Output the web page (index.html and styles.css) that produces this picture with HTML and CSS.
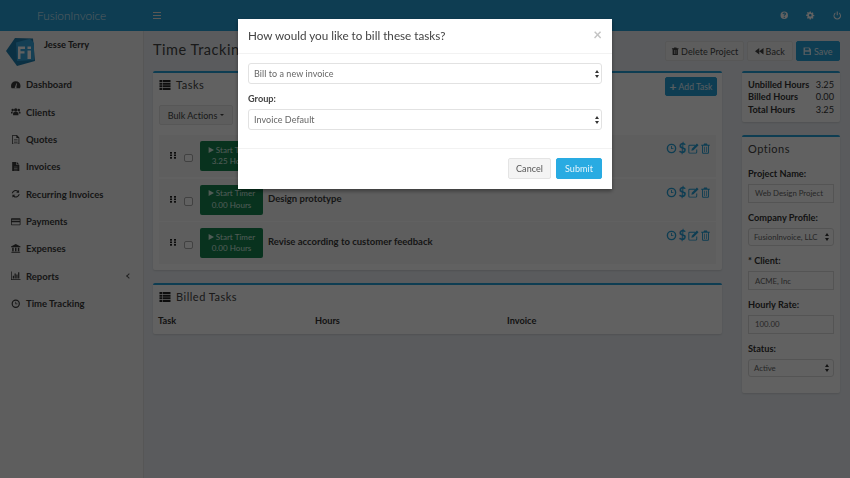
FILE: index.html
```html
<!DOCTYPE html>
<html lang="en">
<head>
  <meta charset="UTF-8" />
  <title>Time Tracking</title>
  <link rel="stylesheet" href="styles.css">
</head>
<body>
  <svg class="defs" width="0" height="0">
    <symbol id="i-clock" viewBox="0 0 16 16"><path d="M8 1a7 7 0 1 0 0 14A7 7 0 0 0 8 1zm0 2a5 5 0 1 1 0 10A5 5 0 0 1 8 3zM7.300 4.500v4.300h3.500V7.500H8.600v-3z"/></symbol>
    <symbol id="i-edit" viewBox="0 0 16 16"><path d="M2.500 2.500h8v1.400h-8a.6.6 0 0 0-.6.6v8.900c0 .3.300.6.600.6h8.900c.3 0 .6-.3.6-.6V9.500h1.400v3.900a2 2 0 0 1-2 2H2.500a2 2 0 0 1-2-2V4.500a2 2 0 0 1 2-2z"/><path d="M13 .8l2.300 2.300-7.400 7.400-3 .7.700-3z"/></symbol>
    <symbol id="i-trash" viewBox="0 0 16 16"><path d="M6 .8h4l1 1.700h3.200V4H13v10a1.500 1.500 0 0 1-1.500 1.500h-7A1.500 1.500 0 0 1 3 14V4H1.800V2.500H5zM4.400 4v10c0 .1.100.2.200.2h6.800c.1 0 .2-.1.200-.2V4zM6 5.500h1V13H6zm3 0h1V13H9z"/></symbol>
    <symbol id="i-trash-solid" viewBox="0 0 16 16"><path fill-rule="evenodd" d="M6 .8h4l1 1.700h3.200V4H13v10a1.500 1.500 0 0 1-1.500 1.500h-7A1.500 1.500 0 0 1 3 14V4H1.800V2.500H5zM6 5.500V13h1V5.500zm3 0V13h1V5.500z"/></symbol>
    <symbol id="i-list" viewBox="0 0 16 14"><path d="M0 0h3.800v2.900H0zM4.600 0H16v2.900H4.600zM0 3.700h3.800v2.900H0zM4.600 3.700H16v2.900H4.600zM0 7.400h3.800v2.900H0zM4.600 7.400H16v2.900H4.600zM0 11.100h3.800V14H0zM4.600 11.100H16V14H4.600z"/></symbol>
    <symbol id="i-play" viewBox="0 0 10 10"><path d="M1 0l9 5-9 5z"/></symbol>
  </svg>

  <header class="topbar">
    <div class="brand">FusionInvoice</div>
    <div class="burger"><span></span><span></span><span></span></div>
    <div class="top-icons">
      <svg viewBox="0 0 16 16"><path fill-rule="evenodd" d="M8 1a7 7 0 1 0 0 14A7 7 0 0 0 8 1zM7 11h2v2H7zm1-8c2 0 3.200 1.100 3.200 2.600 0 1.200-.7 1.800-1.400 2.300-.6.400-.8.600-.8 1.100H7c0-1.200.6-1.800 1.200-2.200.6-.4.900-.7.900-1.100 0-.5-.4-.9-1.100-.9-.8 0-1.200.5-1.300 1.200L4.800 5.700C5 4 6.200 3 8 3z"/></svg>
      <svg viewBox="0 0 16 16"><path fill-rule="evenodd" d="M6.800 1h2.400l.3 2 1.300.6 1.700-1.200 1.700 1.700-1.200 1.700.6 1.300 2 .3v2.400l-2 .3-.6 1.300 1.200 1.700-1.700 1.700-1.700-1.200-1.300.6-.3 2H6.800l-.3-2-1.300-.6-1.700 1.200-1.700-1.700 1.200-1.700L2.400 9.500l-2-.3V6.800l2-.3.6-1.300-1.200-1.700 1.700-1.700 1.700 1.200 1.300-.6zM8 5.500a2.500 2.500 0 1 0 0 5 2.500 2.500 0 0 0 0-5z"/></svg>
      <svg viewBox="0 0 16 16"><path d="M7 1h2v7H7z"/><path d="M4.500 3v2.300a5 5 0 1 0 7 0V3a7 7 0 1 1-7 0z"/></svg>
    </div>
  </header>

  <div class="wrap">
    <aside class="sidebar">
      <div class="user">
        <svg class="logo" viewBox="0 0 30 30">
          <path fill="#1f7fb0" d="M0 14L9 1l18 .5 2 22.500-18 5z"/>
          <path fill="#35a5de" d="M10 5.500L24 1.700 28 6v17l-17 1z"/>
          <path fill="#fff" d="M12 9.500h7v2.400h-4.500v2.400h4v2.300h-4V22H12zM21.500 9.500H25v2.400h-3.500zM21.500 13.500H25V22h-3.500z"/>
        </svg>
        <div class="user-name">Jesse Terry</div>
      </div>
      <nav class="menu">
        <a><svg viewBox="0 0 16 16"><path fill-rule="evenodd" d="M8 2a8 8 0 0 0-8 8c0 1.500.4 2.800 1 4h14c.6-1.200 1-2.500 1-4a8 8 0 0 0-8-8zM7 11.500l2-6 1 .3-1 6a1.500 1.500 0 1 1-2-.3z"/></svg>Dashboard</a>
        <a><svg viewBox="0 0 16 16"><circle cx="8" cy="5" r="3"/><circle cx="2.800" cy="5" r="2"/><circle cx="13.200" cy="5" r="2"/><path d="M3.500 14V10.500C3.500 9 5 8.500 8 8.500s4.500.5 4.500 2V14zM0 11V9c0-1 1-1.500 3-1.500L2.500 11zM16 11V9c0-1-1-1.500-3-1.500l.5 3.500z"/></svg>Clients</a>
        <a><svg viewBox="0 0 16 16"><path fill-rule="evenodd" d="M2 0h8l4 4v12H2zm1.300 1.300v13.400h9.400V5H9V1.300zM5 7h6v1H5zm0 2.500h6v1H5zM5 12h6v1H5z"/></svg>Quotes</a>
        <a><svg viewBox="0 0 16 16"><path fill-rule="evenodd" d="M2 0h7v5h5v11H2zM10 0l4 4h-4zM5 8v1h6V8zm0 2.500v1h6v-1zM5 13v1h6v-1z"/></svg>Invoices</a>
        <a><svg viewBox="0 0 16 16"><path d="M13.600 1.500v5h-5l2-2A4.800 4.800 0 0 0 3.200 7H1.200a6.800 6.800 0 0 1 10.800-4zM2.400 14.500v-5h5l-2 2A4.800 4.800 0 0 0 12.800 9h2A6.800 6.800 0 0 1 4 13z"/></svg>Recurring Invoices</a>
        <a><svg viewBox="0 0 16 16"><path fill-rule="evenodd" d="M1.500 2h13c.8 0 1.500.7 1.500 1.500v9c0 .8-.7 1.500-1.500 1.500h-13C.7 14 0 13.300 0 12.500v-9C0 2.700.7 2 1.500 2zM1.300 4.500v2h13.400v-2zm0 4.500v3.700h13.400V9z"/></svg>Payments</a>
        <a><svg viewBox="0 0 16 16"><path d="M8 0l8 4v1.500H0V4zM2 6.500h2.500V12H2zM6.800 6.500h2.400V12H6.800zM11.500 6.500H14V12h-2.500zM1 13h14v1.200H1zM0 14.800h16V16H0z"/></svg>Expenses</a>
        <a><svg viewBox="0 0 16 16"><path d="M0 1h1.200v12.800H16V15H0zM3 8h2v4.800H3zM6 4h2v8.800H6zM9 6h2v6.800H9zM12 2h2v10.800h-2z"/></svg>Reports<span class="caret"></span></a>
        <a><svg viewBox="0 0 16 16"><use href="#i-clock"/></svg>Time Tracking</a>
      </nav>
    </aside>

    <main class="content">
      <div class="page-head">
        <h1>Time Tracking Project</h1>
        <div class="page-actions">
          <button class="btn btn-delete"><svg viewBox="0 0 16 16"><use href="#i-trash-solid"/></svg>Delete Project</button>
          <button class="btn btn-back"><svg viewBox="0 0 16 16"><path d="M8 2v12L0 8zM16 2v12L8 8z"/></svg>Back</button>
          <button class="btn btn-blue btn-save"><svg viewBox="0 0 16 16"><path fill-rule="evenodd" d="M1 1h11l3 3v11H1zm3 1.500V6h7V2.500zM3.500 9v4.500h9V9z"/></svg>Save</button>
        </div>
      </div>

      <div class="columns">
        <div class="main-col">
          <section class="panel tasks">
            <div class="panel-head">
              <h2><svg class="list-icon" viewBox="0 0 16 14"><use href="#i-list"/></svg>Tasks</h2>
              <button class="btn btn-blue btn-add"><b>+</b>Add Task</button>
            </div>
            <button class="btn btn-bulk">Bulk Actions <i class="down"></i></button>

            <div class="task-row">
              <span class="grip"></span><span class="check"></span>
              <div class="timer"><div><svg viewBox="0 0 10 10"><use href="#i-play"/></svg>Start Timer</div><div>3.25 Hours</div></div>
              <div class="task-name">Create wireframes</div>
              <div class="task-icons">
                <svg viewBox="0 0 16 16"><use href="#i-clock"/></svg><span class="dollar">$</span><svg viewBox="0 0 16 16"><use href="#i-edit"/></svg><svg viewBox="0 0 16 16"><use href="#i-trash"/></svg>
              </div>
            </div>
            <div class="task-row">
              <span class="grip"></span><span class="check"></span>
              <div class="timer"><div><svg viewBox="0 0 10 10"><use href="#i-play"/></svg>Start Timer</div><div>0.00 Hours</div></div>
              <div class="task-name">Design prototype</div>
              <div class="task-icons">
                <svg viewBox="0 0 16 16"><use href="#i-clock"/></svg><span class="dollar">$</span><svg viewBox="0 0 16 16"><use href="#i-edit"/></svg><svg viewBox="0 0 16 16"><use href="#i-trash"/></svg>
              </div>
            </div>
            <div class="task-row">
              <span class="grip"></span><span class="check"></span>
              <div class="timer"><div><svg viewBox="0 0 10 10"><use href="#i-play"/></svg>Start Timer</div><div>0.00 Hours</div></div>
              <div class="task-name">Revise according to customer feedback</div>
              <div class="task-icons">
                <svg viewBox="0 0 16 16"><use href="#i-clock"/></svg><span class="dollar">$</span><svg viewBox="0 0 16 16"><use href="#i-edit"/></svg><svg viewBox="0 0 16 16"><use href="#i-trash"/></svg>
              </div>
            </div>
          </section>

          <section class="panel billed">
            <h2><svg class="list-icon" viewBox="0 0 16 14"><use href="#i-list"/></svg>Billed Tasks</h2>
            <div class="billed-cols">
              <span>Task</span><span>Hours</span><span>Invoice</span>
            </div>
          </section>
        </div>

        <div class="side-col">
          <section class="panel totals">
            <div class="total-row"><b>Unbilled Hours</b><span>3.25</span></div>
            <div class="total-row"><b>Billed Hours</b><span>0.00</span></div>
            <div class="total-row"><b>Total Hours</b><span>3.25</span></div>
          </section>
          <section class="panel options">
            <h2>Options</h2>
            <label>Project Name:</label>
            <div class="field">Web Design Project</div>
            <label>Company Profile:</label>
            <div class="field field-select">FusionInvoice, LLC<span class="updown"></span></div>
            <label>* Client:</label>
            <div class="field">ACME, Inc</div>
            <label>Hourly Rate:</label>
            <div class="field">100.00</div>
            <label>Status:</label>
            <div class="field field-select">Active<span class="updown"></span></div>
          </section>
        </div>
      </div>
    </main>
  </div>

  <div class="backdrop"></div>

  <div class="modal">
    <div class="modal-head">
      <h3>How would you like to bill these tasks?</h3>
      <span class="close">×</span>
    </div>
    <div class="modal-body">
      <div class="select-box">
        <select><option>Bill to a new invoice</option></select>
        <span class="updown"></span>
      </div>
      <label>Group:</label>
      <div class="select-box">
        <select><option>Invoice Default</option></select>
        <span class="updown"></span>
      </div>
    </div>
    <div class="modal-foot">
      <button class="mbtn">Cancel</button>
      <button class="mbtn mbtn-blue">Submit</button>
    </div>
  </div>
</body>
</html>
```

FILE: styles.css
```css
* {
  margin: 0;
  padding: 0;
  box-sizing: border-box;
  font-family: 'Lato', sans-serif;
}

body {
  width: 850px;
  height: 478px;
  overflow: hidden;
  background: #ecf0f5;
  color: #333;
  font-size: 9.500px;
}

.defs {
  position: absolute;
}

svg {
  fill: currentColor;
}

/* Top bar */
.topbar {
  height: 31px;
  background: #25a0d8;
  display: flex;
  align-items: center;
  color: #fff;
}

.brand {
  width: 143px;
  padding-left: 37px;
  font-size: 11.800px;
  font-weight: 300;
  color: #dfeef6;
}

.burger {
  width: 8px;
  margin-left: 10px;
  display: flex;
  flex-direction: column;
  gap: 1.500px;
}

.burger span {
  height: 1.500px;
  background: #f0e6e0;
}

.top-icons {
  margin-left: auto;
  padding-right: 9px;
  display: flex;
  gap: 18px;
  color: #fff;
}

.top-icons svg {
  width: 8.500px;
  height: 8.500px;
}

.wrap {
  display: flex;
  height: 447px;
}

/* Sidebar */
.sidebar {
  width: 144px;
  flex-shrink: 0;
  background: #f7f7f7;
  border-right: 1px solid #e2e2e2;
  padding-left: 6px;
}

.user {
  display: flex;
  height: 40px;
  padding-top: 6px;
}

.logo {
  width: 30px;
  height: 30px;
  flex-shrink: 0;
}

.user-name {
  margin-left: 8px;
  margin-top: 2px;
  font-size: 9.300px;
  font-weight: 700;
  color: #333;
}

.menu a {
  display: flex;
  align-items: center;
  height: 27.350px;
  padding-left: 5px;
  font-weight: 700;
  color: #3a3a3a;
}

.menu svg {
  width: 9.500px;
  height: 9.500px;
  margin-right: 5.500px;
  flex-shrink: 0;
}

.caret {
  width: 4px;
  height: 4px;
  margin-left: auto;
  margin-right: 12px;
  border-left: 1px solid #555;
  border-bottom: 1px solid #555;
  transform: rotate(45deg);
}

/* Content */
.content {
  flex: 1;
  padding: 0 10px 0 9px;
}

.page-head {
  display: flex;
  justify-content: space-between;
  height: 40px;
  padding-top: 10px;
}

h1 {
  font-size: 14.500px;
  line-height: 18px;
  font-weight: 400;
  color: #444;
  letter-spacing: 0.55px;
}

.page-actions {
  display: flex;
  gap: 3px;
}

.btn {
  height: 20px;
  display: inline-flex;
  align-items: center;
  justify-content: center;
  background: #f4f4f4;
  border: 1px solid #e4e4e4;
  border-radius: 2px;
  font-size: 9px;
  letter-spacing: 0.05px;
  white-space: nowrap;
  color: #444;
}

.btn svg {
  width: 8.500px;
  height: 8.500px;
  margin-right: 2px;
  flex-shrink: 0;
}

.btn-delete {
  width: 79px;
}

.btn-back {
  width: 46px;
}

.btn-save {
  width: 44px;
}

.btn-blue {
  background: #25a0d8;
  border-color: #25a0d8;
  color: #e6f5fc;
}

.columns {
  display: flex;
  gap: 20px;
}

.main-col {
  width: 569px;
}

.side-col {
  width: 98px;
}

.panel {
  background: #fff;
  border-top: 2px solid #25a0d8;
  border-radius: 2px;
  box-shadow: 0 1px 2px rgba(0, 0, 0, 0.12);
}

h2 {
  display: flex;
  align-items: center;
  font-size: 11px;
  line-height: 16px;
  font-weight: 400;
  color: #444;
  letter-spacing: 0.5px;
}

.list-icon {
  width: 12px;
  height: 10px;
  margin-right: 5px;
  color: #222;
}

.tasks {
  height: 199px;
  padding: 0 6px;
}

.panel-head {
  display: flex;
  justify-content: space-between;
  align-items: flex-start;
  height: 32px;
  padding-top: 4px;
}

.btn-add {
  width: 52px;
  height: 19px;
  margin-right: -1px;
  font-size: 8.500px;
}

.btn-add b {
  margin-right: 2px;
  font-size: 12px;
  line-height: 10px;
}

.btn-bulk {
  width: 74px;
  height: 20px;
  margin-bottom: 10px;
}

.down {
  display: inline-block;
  margin-left: 3px;
  border-top: 2.500px solid #444;
  border-left: 2.500px solid transparent;
  border-right: 2.500px solid transparent;
}

.task-row {
  display: flex;
  align-items: flex-start;
  height: 42px;
  margin-bottom: 1.700px;
  padding-top: 6px;
  background: #f6f6f6;
}

.grip {
  width: 6px;
  height: 7px;
  margin: 11px 0 0 11px;
  background-image: linear-gradient(#222 2px, transparent 2px);
  background-size: 100% 2.500px;
  position: relative;
}

/* cuts the bars of the grip into two columns of dots */
.grip::after {
  content: '';
  position: absolute;
  top: 0;
  bottom: 0;
  left: 2px;
  width: 2px;
  background: #f6f6f6;
}

.check {
  width: 8.500px;
  height: 8.500px;
  margin: 12.500px 0 0 8px;
  background: #fff;
  border: 1px solid #aaa;
  border-radius: 2px;
  flex-shrink: 0;
}

.timer {
  width: 63px;
  height: 30px;
  margin-left: 7.500px;
  padding-top: 3.500px;
  background: #158350;
  border-radius: 2px;
  color: #d5efe0;
  font-size: 8px;
  line-height: 11.500px;
  letter-spacing: 0.05px;
  text-align: center;
  flex-shrink: 0;
}

.timer svg {
  width: 6px;
  height: 6px;
  margin-right: 2px;
}

.task-name {
  margin-left: 5px;
  margin-top: 8px;
  font-weight: 700;
  color: #3a3a3a;
}

.task-icons {
  margin-left: auto;
  margin-right: 5px;
  margin-top: 1px;
  display: flex;
  align-items: center;
  gap: 1.500px;
  color: #25a0d8;
}

.task-icons svg {
  width: 11px;
  height: 11px;
}

.dollar {
  font-size: 13px;
  line-height: 13px;
  font-weight: 700;
}

.billed {
  height: 51px;
  margin-top: 13px;
  padding: 4px 5px;
}

.billed h2 {
  margin-left: 1px;
}

.billed-cols {
  display: grid;
  grid-template-columns: 157px 192px 1fr;
  margin-top: 10px;
  font-size: 9.200px;
  font-weight: 700;
}

.totals {
  height: 51px;
  padding: 6px 6px;
  font-size: 9.200px;
  line-height: 12.300px;
}

.total-row {
  display: flex;
  justify-content: space-between;
}

.total-row b {
  font-weight: 700;
  white-space: nowrap;
}

.options {
  height: 258px;
  margin-top: 13px;
  padding: 4px 6px;
}

.options h2 {
  margin-bottom: 11px;
}

.options label {
  display: block;
  height: 12px;
  line-height: 12px;
  margin-top: 9.200px;
  font-size: 9.200px;
  font-weight: 700;
  white-space: nowrap;
}

.options h2 + label {
  margin-top: 0;
}

.field {
  height: 18.500px;
  margin-top: 4px;
  padding-left: 6px;
  display: flex;
  align-items: center;
  position: relative;
  border: 1px solid #ddd;
  font-size: 7.800px;
  color: #666;
  white-space: nowrap;
}

.field-select {
  border-radius: 3px;
  padding-left: 5px;
}

/* the stacked up and down arrows of a select */
.updown {
  position: absolute;
  right: 3px;
  top: 50%;
  width: 5px;
  height: 8px;
  margin-top: -4px;
  pointer-events: none;
}

.updown::before,
.updown::after {
  content: '';
  position: absolute;
  left: 0;
  border-left: 2.500px solid transparent;
  border-right: 2.500px solid transparent;
}

.updown::before {
  top: 0;
  border-bottom: 3.500px solid #333;
}

.updown::after {
  bottom: 0;
  border-top: 3.500px solid #333;
}

/* Modal */
.backdrop {
  position: fixed;
  top: 0;
  left: 0;
  width: 100%;
  height: 100%;
  background: rgba(0, 0, 0, 0.62);
}

.modal {
  position: fixed;
  top: 19px;
  left: 238px;
  width: 374px;
  height: 170px;
  background: #fff;
  box-shadow: 0 2px 4px rgba(0, 0, 0, 0.4);
}

.modal-head {
  display: flex;
  justify-content: space-between;
  height: 35px;
  padding: 0 10px;
  border-bottom: 1px solid #f2f2f2;
}

h3 {
  margin-top: 9px;
  font-size: 11.700px;
  font-weight: 400;
  color: #444;
}

.close {
  font-size: 15px;
  line-height: 30px;
  font-weight: 700;
  color: #c4c4c4;
}

.modal-body {
  height: 95px;
  padding: 9px 10px 0;
  border-bottom: 1px solid #f2f2f2;
}

.modal-body label {
  display: block;
  height: 12px;
  line-height: 12px;
  margin-top: 9px;
  margin-bottom: 4px;
  font-size: 9.200px;
  font-weight: 700;
  color: #444;
}

.select-box {
  position: relative;
  height: 21px;
}

.select-box .updown {
  right: 2px;
}

select {
  width: 100%;
  height: 21px;
  padding: 0 0 1px 5px;
  appearance: none;
  background: #fff;
  border: 1px solid #e2e2e2;
  border-radius: 3px;
  font-size: 9px;
  letter-spacing: 0.05px;
  color: #666;
}

.modal-foot {
  display: flex;
  justify-content: flex-end;
  gap: 5px;
  padding: 9px 10px;
}

.mbtn {
  width: 43px;
  height: 21px;
  background: #f4f4f4;
  border: 1px solid #e4e4e4;
  border-radius: 2px;
  font-size: 9px;
  letter-spacing: 0.05px;
  color: #555;
}

.mbtn-blue {
  width: 46px;
  background: #29abe2;
  border-color: #29abe2;
  color: #e6f5fc;
}
```
